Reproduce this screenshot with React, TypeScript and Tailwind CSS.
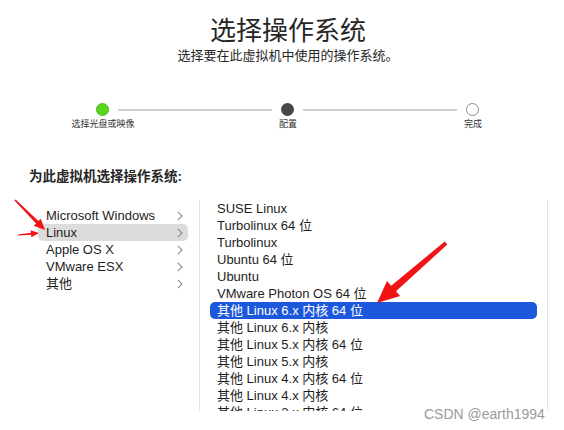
import React from "react";

const font = { fontFamily: '"Liberation Sans", "Noto Sans CJK SC", sans-serif' };

const families = [
  { name: "Microsoft Windows" },
  { name: "Linux", active: true },
  { name: "Apple OS X" },
  { name: "VMware ESX" },
  { name: "其他" },
];

const versions = [
  "SUSE Linux",
  "Turbolinux 64 位",
  "Turbolinux",
  "Ubuntu 64 位",
  "Ubuntu",
  "VMware Photon OS 64 位",
  "其他 Linux 6.x 内核 64 位",
  "其他 Linux 6.x 内核",
  "其他 Linux 5.x 内核 64 位",
  "其他 Linux 5.x 内核",
  "其他 Linux 4.x 内核 64 位",
  "其他 Linux 4.x 内核",
  "其他 Linux 3.x 内核 64 位",
];

const Chevron = () => (
  <svg width="6" height="10" viewBox="0 0 6 10" className="shrink-0">
    <polyline points="0.8,0.8 5,5 0.8,9.2" fill="none" stroke="#8c8c8c" strokeWidth="1.1" />
  </svg>
);

// tapered red arrow, tail -> tip
function arrow(x1: number, y1: number, x2: number, y2: number, tw: number, sw: number, hw: number, hl: number) {
  const len = Math.hypot(x2 - x1, y2 - y1);
  const dx = (x2 - x1) / len;
  const dy = (y2 - y1) / len;
  const nx = -dy;
  const ny = dx;
  const bx = x2 - dx * hl;
  const by = y2 - dy * hl;
  const p = (x: number, y: number) => `${x.toFixed(1)},${y.toFixed(1)}`;
  return [
    p(x1 + nx * tw, y1 + ny * tw),
    p(bx + nx * sw, by + ny * sw),
    p(bx + nx * hw, by + ny * hw),
    p(x2, y2),
    p(bx - nx * hw, by - ny * hw),
    p(bx - nx * sw, by - ny * sw),
    p(x1 - nx * tw, y1 - ny * tw),
  ].join(" ");
}

const Steps = () => (
  <div className="mt-[39px]">
    <div className="flex items-center pl-[96px]">
      <div className="w-[13px] h-[13px] rounded-full bg-[#5bd61e] border border-[#4cb818]" />
      <div className="ml-[9px] w-[154px] h-[2px] bg-[#d0d0d0]" />
      <div className="ml-[9px] w-[13px] h-[13px] rounded-full bg-[#474747]" />
      <div className="ml-[9px] w-[154px] h-[2px] bg-[#d0d0d0]" />
      <div className="ml-[9px] w-[13px] h-[13px] rounded-full bg-white border border-[#8a8a8a]" />
    </div>
    <div className="flex pl-[43px] gap-[65px] mt-[2px] text-[9px] leading-[12px] text-[#333]">
      <div className="w-[120px] text-center">选择光盘或映像</div>
      <div className="w-[120px] text-center">配置</div>
      <div className="w-[120px] text-center">完成</div>
    </div>
  </div>
);

export default function App() {
  return (
    <div className="relative w-[564px] h-[430px] overflow-hidden bg-white text-[#1e1e1e]" style={font}>
      <div className="pt-[16px] pl-[12px] text-center">
        <h1 className="text-[26px] leading-[30px] text-[#262626]">选择操作系统</h1>
        <p className="mt-[2px] text-[13px] leading-[16px] text-[#262626]">选择要在此虚拟机中使用的操作系统。</p>
      </div>

      <Steps />

      <div className="mt-[39px] pl-[29px] text-[13.5px] leading-[16px] font-bold text-[#262626]">为此虚拟机选择操作系统:</div>

      <div className="mt-[15px] flex h-[211px]">
        <div className="w-[200px] border-r border-[#e2e2e2] pt-[7px] pl-[38px] pr-[11px]">
          {families.map((f) => (
            <div
              key={f.name}
              className={`flex items-center justify-between h-[17px] pl-[8px] pr-[5px] rounded-[5px] text-[13px] ${f.active ? "bg-[#dcdcdc]" : ""}`}
            >
              <span>{f.name}</span>
              <Chevron />
            </div>
          ))}
        </div>
        <div className="w-[348px] border-r border-[#e2e2e2] pl-[10px] pr-[10px] overflow-hidden">
          {versions.map((v, i) => (
            <div
              key={v}
              className={`h-[17px] leading-[17px] pl-[7px] rounded-[5px] text-[13px] whitespace-nowrap ${i === 6 ? "bg-[#1c58dc] text-white" : ""}`}
            >
              {v}
            </div>
          ))}
        </div>
      </div>

      <div className="absolute left-[424px] top-[405px] text-[14px] leading-[18px] text-[#9a9a9a]">CSDN @earth1994</div>

      <svg className="absolute inset-0 pointer-events-none" width="564" height="430">
        <polygon points={arrow(15, 200, 45, 230, 0.8, 1.6, 5, 11)} fill="#f01414" />
        <polygon points={arrow(18, 235, 39, 233, 0.4, 1, 3.5, 8)} fill="#f01414" />
        <polygon points={arrow(446, 243, 377, 303, 2, 3.6, 10, 22)} fill="#f01414" />
      </svg>
    </div>
  );
}
